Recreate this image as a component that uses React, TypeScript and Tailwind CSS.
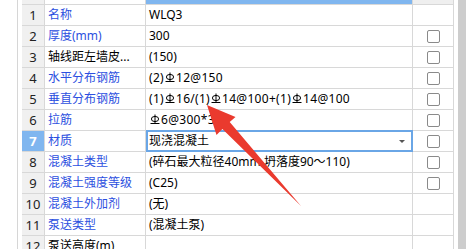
import React from "react";

const Rebar = () => (
  <svg width="10" height="11" viewBox="0 0 10 11" className="inline-block mx-px -mt-[3px] align-middle" fill="none" stroke="#000" strokeWidth="1">
    <ellipse cx="5" cy="5" rx="3.6" ry="2.6" />
    <line x1="5" y1="0.5" x2="5" y2="9.5" />
    <line x1="0.5" y1="9.5" x2="9.5" y2="9.5" />
  </svg>
);

type Row = { n: number; name: string; blue: boolean; value: React.ReactNode; check: boolean; sel?: boolean; wide?: boolean };

const rows: Row[] = [
  { n: 1, name: "名称", blue: true, value: "WLQ3", check: false },
  { n: 2, name: "厚度(mm)", blue: true, value: "300", check: true },
  { n: 3, name: "轴线距左墙皮...", blue: false, value: "(150)", check: true },
  { n: 4, name: "水平分布钢筋", blue: true, value: <>(2)<Rebar />12@150</>, check: true, wide: true },
  {
    n: 5,
    name: "垂直分布钢筋",
    blue: true,
    value: <>(1)<Rebar />16/(1)<Rebar />14@100+(1)<Rebar />14@100</>,
    check: true,
    wide: true,
  },
  { n: 6, name: "拉筋", blue: true, value: <><Rebar />6@300*300</>, check: true, wide: true },
  { n: 7, name: "材质", blue: true, value: "现浇混凝土", check: true, sel: true },
  { n: 8, name: "混凝土类型", blue: true, value: "(碎石最大粒径40mm 坍落度90～110)", check: true },
  { n: 9, name: "混凝土强度等级", blue: true, value: "(C25)", check: true },
  { n: 10, name: "混凝土外加剂", blue: true, value: "(无)", check: false },
  { n: 11, name: "泵送类型", blue: true, value: "(混凝土泵)", check: false },
  { n: 12, name: "泵送高度(m)", blue: false, value: "", check: false },
];

export default function App() {
  return (
    <div
      className="relative w-[472px] h-[249px] overflow-hidden bg-white flex text-[12px] leading-none"
      style={{ fontFamily: '"Noto Sans", "Noto Sans CJK SC", sans-serif' }}
    >
      <div className="w-[17px] shrink-0" />
      <div className="w-px shrink-0 bg-[#d6d6d6]" />
      <div className="w-[4px] shrink-0" />
      <div className="w-[432px] shrink-0 flex flex-col">
        <div className="flex h-[5px] shrink-0 border-b border-[#d8d8d8]">
          <div className="w-[23px] shrink-0 bg-[#f0f0f0] border-r border-[#d8d8d8]" />
          <div className="w-[101px] shrink-0 bg-white border-r border-[#d8d8d8]" />
          <div className="w-[267px] shrink-0 bg-[#80b6ef] border-r border-[#d8d8d8]" />
          <div className="w-[41px] shrink-0 bg-[#efefef] border-r border-[#d8d8d8]" />
        </div>
        {rows.map((r) => (
          <div key={r.n} className="flex h-[21px] shrink-0 border-b border-[#d8d8d8]">
            <div
              className={`w-[23px] shrink-0 border-r border-[#d8d8d8] flex items-center justify-center text-[13px] ${
                r.sel ? "bg-[#80b6ef] text-white font-bold" : "bg-[#f0f0f0] text-[#222]"
              }`}
            >
              {r.n}
            </div>
            <div
              className={`w-[101px] shrink-0 border-r border-[#d8d8d8] flex items-center pl-[3px] whitespace-nowrap overflow-hidden ${
                r.blue ? "text-[#2c4fe0]" : "text-black"
              }`}
            >
              {r.name}
            </div>
            <div className="relative w-[267px] shrink-0 border-r border-[#d8d8d8] flex items-center pl-[3px] whitespace-nowrap text-black">
              <span className={r.wide ? "tracking-[0.3px]" : ""}>{r.value}</span>
              {r.sel && (
                <div className="absolute -top-px -bottom-px left-0 -right-px border-2 border-[#6aa6e6] flex items-center justify-end pr-[6px]">
                  <div className="w-0 h-0 border-l-[3px] border-r-[3px] border-t-[3px] border-l-transparent border-r-transparent border-t-[#555]" />
                </div>
              )}
            </div>
            <div className="w-[41px] shrink-0 border-r border-[#d8d8d8] flex items-center justify-center">
              {r.check && <div className="w-[13px] h-[13px] rounded-[2px] border border-[#8a8a8a] bg-white" />}
            </div>
          </div>
        ))}
      </div>
      <div className="w-[4px] shrink-0" />
      <div className="w-[8px] shrink-0 bg-[#cdcdcd]" />
      <div className="w-[6px] shrink-0" />
      <svg className="absolute inset-0 pointer-events-none" width="472" height="249" viewBox="0 0 472 249">
        <polygon
          points="207,105 235.5,117 229.7,122.1 301,206 222.4,128.9 216.5,135"
          fill="#ea3a2e"
        />
      </svg>
    </div>
  );
}
